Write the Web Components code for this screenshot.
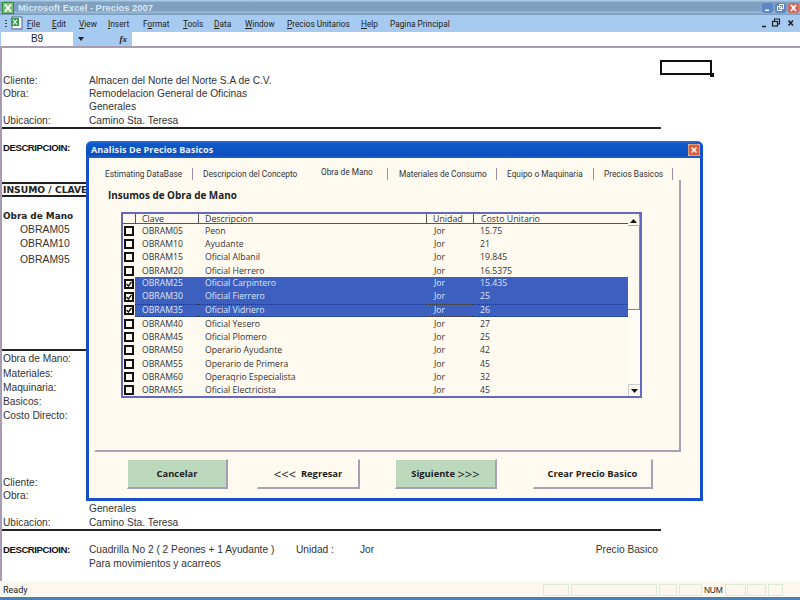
<!DOCTYPE html>
<html><head><meta charset="utf-8">
<style>
html,body{margin:0;padding:0;width:800px;height:600px;overflow:hidden;background:#fff}
body{display:flex;flex-direction:column;position:relative;font-family:"Open Sans","Noto Sans",sans-serif;color:#222}
</style></head><body>
<xl-titlebar></xl-titlebar>
<xl-menubar></xl-menubar>
<xl-formula></xl-formula>
<xl-sheet></xl-sheet>
<xl-status></xl-status>
<price-dialog></price-dialog>
<script>
function def(name,css,html,init){
  customElements.define(name,class extends HTMLElement{
    connectedCallback(){
      if(this.shadowRoot)return;
      const r=this.attachShadow({mode:'open'});
      r.innerHTML='<style>'+css+'</style>'+html;
      if(init)init(r,this);
    }
  });
}
def('xl-titlebar',`
:host{display:flex;align-items:center;height:15px;flex:none;position:relative;box-sizing:border-box;
 background:linear-gradient(180deg,#a9c9e6 0,#a9c9e6 1px,#80a0bf 2px,#7f9fbe 11px,#9dbfe0 12px,#7f9fbe 14px);}
.t{font:bold 9.4px "Liberation Sans",sans-serif;color:#dbe8f4;margin-left:4px;white-space:nowrap}
.ic{margin-left:2px;display:block}
.sp{flex:1}
.b{width:11px;height:10px;border-radius:2px;margin-right:2px;display:block}
.btns{display:flex;margin-right:1px;align-items:center}
`,`<svg class="ic" width="12" height="12" viewBox="0 0 12 12"><rect width="12" height="12" fill="#2f8a4a"/><rect x="1" y="1" width="10" height="10" fill="#7fbf7f"/><path d="M3 2.5L9 9.5M9 2.5L3 9.5" stroke="#fff" stroke-width="1.8"/></svg>
<span class="t">Microsoft Excel - Precios 2007</span><span class="sp"></span>
<span class="btns">
<svg class="b" viewBox="0 0 11 10"><rect width="11" height="10" rx="2" fill="#5a86c8"/><rect x="3" y="6.5" width="4" height="1.6" fill="#fff"/></svg>
<svg class="b" viewBox="0 0 11 10"><rect width="11" height="10" rx="2" fill="#5a86c8"/><path d="M4.5 1.5h4v4h-4zM2.5 3.5h4v4h-4z" fill="#5a86c8" stroke="#fff"/></svg>
<svg class="b" viewBox="0 0 11 10" style="margin-right:0"><rect width="11" height="10" rx="2" fill="#cf6a60"/><path d="M3 2l5 6M8 2L3 8" stroke="#fff" stroke-width="1.6"/></svg>
</span>`);
def('xl-menubar',`
:host{display:flex;align-items:center;height:17px;flex:none;background:#a6caf0;font:8.3px Roboto,"Open Sans",sans-serif;color:#222;position:relative;box-sizing:border-box}
.g{width:2px;height:10px;margin-left:5px;background-image:radial-gradient(#345 45%,transparent 50%);background-size:2px 3px}
.ic{margin-left:3px;margin-right:3px;display:block}
.items{display:grid;grid-template-columns:25px 27px 29px 35px 40px 31px 31px 42px 74px 29px auto;white-space:nowrap}
u{text-decoration-thickness:1px;text-underline-offset:1px}
.sp{flex:1}
.w{display:flex;align-items:center;width:41px;height:17px}
.w svg{display:block}
`,`<span class="g"></span>
<svg class="ic" width="14" height="15" viewBox="0 0 14 15"><rect x="2" y="1" width="10" height="12" fill="#f3f6f2" stroke="#55698a"/><rect x="1" y="2" width="8" height="8" fill="#3f9a4e"/><path d="M3 3.5l4 5M7 3.5l-4 5" stroke="#fff" stroke-width="1.2"/><path d="M4 13h8" stroke="#7b8aa5"/></svg>
<span class="items">
<span><u>F</u>ile</span><span><u>E</u>dit</span><span><u>V</u>iew</span><span><u>I</u>nsert</span><span>F<u>o</u>rmat</span><span><u>T</u>ools</span><span><u>D</u>ata</span><span><u>W</u>indow</span><span><u>P</u>recios Unitarios</span><span><u>H</u>elp</span><span>Pagina Principal</span>
</span><span class="sp"></span>
<span class="w"><svg width="41" height="17" viewBox="0 0 41 17"><path d="M3 11.5h4" stroke="#222" stroke-width="1.6"/><path d="M15.5 6.5V4h5v5h-2" fill="none" stroke="#222" stroke-width="1.2"/><rect x="13.5" y="6.5" width="5" height="4.5" fill="none" stroke="#222" stroke-width="1.2"/><path d="M29.5 5.5l4.5 5M34 5.5l-4.5 5" stroke="#222" stroke-width="1.6"/></svg></span>`);
def('xl-formula',`
:host{display:grid;grid-template-columns:1px 72px 59px 1fr;height:14px;flex:none;background:#a6caf0}
.n{background:#fff;font:10px "Liberation Sans",sans-serif;text-align:center;line-height:14px;color:#222}
.m{display:flex;align-items:center;justify-content:space-between;padding:0 3px 0 5px;box-sizing:border-box}
.f{background:#fff}
i{font:italic bold 9px "Liberation Serif",serif;color:#222;margin-right:2px}
`,`<span></span><span class="n">B9</span><span class="m"><svg width="6" height="4" viewBox="0 0 6 4"><path d="M0 0h6L3 4z" fill="#222"/></svg><i>fx</i></span><span class="f"></span>`);
def('xl-sheet',`
:host{display:block;flex:1;min-height:0;position:relative;border-top:2px solid #a89cb2;border-left:2px solid #a89cb2;box-sizing:border-box;background:#fff;overflow:hidden}
.w{display:flex;flex-direction:column;margin-left:-2px;padding-top:24.6px}
.r{display:grid;grid-template-columns:86px 1fr;padding-left:3px;height:13.4px;line-height:13.4px;white-space:nowrap;color:#333;font:10.2px/13.4px "Liberation Sans",sans-serif}
.rule{height:2px;width:661px;background:#222;flex:none}
.b{font:bold 9.6px/13.4px "Liberation Sans",sans-serif;color:#111;letter-spacing:-.45px}
.h{font:bold 9.2px "DejaVu Sans",sans-serif;color:#222;padding-left:3px;height:11px;line-height:11px;white-space:nowrap}
.o{font:bold 8.9px "DejaVu Sans",sans-serif;color:#222;padding-left:3px;height:14px;line-height:14px;white-space:nowrap}
.c{padding-left:20px;height:14.6px;font:10.4px/14.6px "Liberation Sans",sans-serif;color:#333}
.cell{position:absolute;left:658px;top:12px;width:48px;height:11px;border:2px solid #111}
.cell::after{content:"";position:absolute;right:-4px;bottom:-4px;width:4px;height:4px;background:#111}
.g{display:grid;grid-template-columns:86px 207px 64px 1fr;padding-left:3px;height:13.4px;line-height:13.4px;white-space:nowrap;color:#333;font:10.2px/13.4px "Liberation Sans",sans-serif;width:661px;box-sizing:border-box}
.j{display:flex;justify-content:space-between;padding-right:3px}
`,`<div class="cell"></div><div class="w">
<div class="r" style="margin-top:1px"><span>Cliente:</span><span>Almacen del Norte del Norte S.A de C.V.</span></div>
<div class="r"><span>Obra:</span><span>Remodelacion General de Oficinas</span></div>
<div class="r"><span></span><span>Generales</span></div>
<div class="r"><span>Ubicacion:</span><span>Camino Sta. Teresa</span></div>
<div class="rule"></div>
<div class="r" style="margin-top:12px"><span class="b">DESCRIPCIOIN:</span></div>
<div class="rule" style="margin-top:27px"></div>
<div class="h">INSUMO / CLAVE</div>
<div class="rule"></div>
<div class="o" style="margin-top:12px">Obra de Mano</div>
<div class="c">OBRAM05</div><div class="c">OBRAM10</div><div class="c" style="margin-top:1px">OBRAM95</div>
<div class="rule" style="margin-top:82px"></div>
<div class="r" style="height:14.2px;margin-top:1px"><span>Obra de Mano:</span></div>
<div class="r" style="height:14.2px"><span>Materiales:</span></div>
<div class="r" style="height:14.2px"><span>Maquinaria:</span></div>
<div class="r" style="height:14.2px"><span>Basicos:</span></div>
<div class="r" style="height:14.2px"><span>Costo Directo:</span></div>
<div class="r" style="margin-top:52.3px"><span>Cliente:</span></div>
<div class="r"><span>Obra:</span></div>
<div class="r"><span></span><span>Generales</span></div>
<div class="r"><span>Ubicacion:</span><span>Camino Sta. Teresa</span></div>
<div class="rule"></div>
<div class="g" style="margin-top:12px"><span class="b">DESCRIPCIOIN:</span><span>Cuadrilla No 2 ( 2 Peones + 1 Ayudante )</span><span>Unidad :</span><span class="j"><span>Jor</span><span>Precio Basico</span></span></div>
<div class="r" style="margin-top:.7px"><span></span><span>Para movimientos y acarreos</span></div>
</div>`);
def('xl-status',`
:host{display:flex;flex:none;height:19px;flex-direction:column;background:#fdf8ee}
.m{flex:1;display:flex;align-items:flex-end;font:9px Roboto,sans-serif;color:#222;padding-left:3px}
.rd{align-self:center;padding-top:1px}
.sp{flex:1}
.p{box-sizing:border-box;height:12px;margin-bottom:1px;border:1px solid #dcebd8;margin-right:2px;font:8.5px/10px "Liberation Sans",sans-serif;text-align:center;letter-spacing:-.3px}
.b{height:3px;background:#4a80b8;flex:none}
`,`<div class="m"><span class="rd">Ready</span><span class="sp"></span>
<span class="p" style="width:26px"></span><span class="p" style="width:86px"></span><span class="p" style="width:18px"></span><span class="p" style="width:23px;margin-right:1px"></span><span class="p" style="width:20px;border-color:transparent">NUM</span><span class="p" style="width:21px;margin-right:1px"></span><span class="p" style="width:19px"></span><span class="p" style="width:15px;margin-right:17px"></span>
</div><div class="b"></div>`);
def('ui-button',`
:host{display:flex;align-items:center;justify-content:center;box-sizing:border-box;height:30px;background:#fffaf0;
 border-right:2px solid #a99fb0;border-bottom:2px solid #a99fb0;border-top:1px solid #fffdf7;border-left:1px solid #fffdf7;
 font:bold 9.4px "Open Sans",sans-serif;color:#1c1c1c;white-space:nowrap}
:host([green]){background:#bcd9bd}
`,`<slot></slot>`);
def('tab-strip',`
:host{display:grid;grid-template-columns:100px 116px 79px 109px 97px 79px;height:18px;margin-left:4px;font:8.3px/18px Roboto,"Open Sans",sans-serif;color:#333;white-space:nowrap}
span{box-sizing:border-box;position:relative;padding-left:var(--p,10px)}
.e::after{content:"";position:absolute;right:0;top:3px;height:12px;width:1px;background:#9a8fa6}
.s{line-height:15px}
`,`<span class="e" style="--p:12px">Estimating DataBase</span>
<span>Descripcion del Concepto</span>
<span class="e s" style="--p:12px">Obra de Mano</span>
<span class="e" style="--p:11px">Materiales de Consumo</span><span class="e">Equipo o Maquinaria</span><span class="e">Precios Basicos</span>`);
def('price-list',`
:host{display:block;position:relative;width:521px;height:186px;box-sizing:border-box;border:2px solid #6468c4;background:#fffaf0;font:8.7px "Open Sans",sans-serif;color:#333;overflow:hidden}
.cols{display:grid;grid-template-columns:12px 63px 228px 47px 1fr;align-items:center;white-space:nowrap}
.h{height:9px;line-height:11px;border-bottom:1px solid #555;width:505px;box-sizing:content-box;font-size:8.8px}
.h span{border-left:1px solid #555;padding-left:6px;height:9px;box-sizing:border-box}
.h span:first-child{border:0;padding:0}
.h span:last-child{padding-left:7px}
.body{display:flex;flex-direction:column;width:505px}
.r{height:13.3px;flex:none}
.r span{padding-left:7px}
.r span:nth-child(4){padding-left:8px}
.r span:nth-child(5){padding-left:7px}
.sel .c~span{background:#3d5fbf;color:#dde4f6;height:13.3px;line-height:13.3px}
.foc .c~span{border-top:1px dotted #333;border-bottom:1px dotted #333;line-height:11.3px;box-sizing:border-box}
.c{padding:0 0 0 1px!important;display:flex;align-items:center;height:13.3px}
.c i{display:block;width:10px;height:10px;box-sizing:border-box;border:2px solid #111;background:#fffaf0;position:relative}
.c svg{display:block;position:absolute;left:0;top:0}
.sb{position:absolute;right:0;top:0;bottom:0;width:12px;background:#fffcf6}
.thumb{position:absolute;left:0;right:0;top:0;height:96px;background:#fffaf0;border-bottom:1px solid #888;border-right:1px solid #888;box-sizing:border-box}
.up,.dn{position:absolute;left:0;width:12px;height:9px;background:#fffaf0;display:flex;align-items:center;justify-content:center;box-sizing:border-box}
.up{top:3px;border-bottom:1px solid #aaa;border-right:1px solid #aaa}
.dn{bottom:0;height:12px;border-left:1px solid #ccc;border-top:1px solid #ccc}
`,`<div class="cols h"><span></span><span>Clave</span><span>Descripcion</span><span>Unidad</span><span>Costo Unitario</span></div><div class="body"></div>
<div class="sb"><div class="thumb"></div><div class="up"><svg width="7" height="4" viewBox="0 0 7 4"><path d="M0 4h7L3.5 0z" fill="#111"/></svg></div><div class="dn"><svg width="7" height="4" viewBox="0 0 7 4"><path d="M0 0h7L3.5 4z" fill="#111"/></svg></div></div>`,
(r)=>{
 const d=[['05','Peon','15.75'],['10','Ayudante','21'],['15','Oficial Albanil','19.845'],['20','Oficial Herrero','16.5375'],['25','Oficial Carpintero','15.435',1],['30','Oficial Fierrero','25',1],['35','Oficial Vidriero','26',2],['40','Oficial Yesero','27'],['45','Oficial Plomero','25'],['50','Operario Ayudante','42'],['55','Operario de Primera','45'],['60','Operaqrio Especialista','32'],['65','Oficial Electricista','45']];
 r.querySelector('.body').innerHTML=d.map(x=>`<div class="cols r ${x[3]?'sel':''} ${x[3]==2?'foc':''}"><span class="c"><i>${x[3]?'<svg width="6" height="6" viewBox="0 0 6 6"><path d="M.5 3l2 2L5.5.8" fill="none" stroke="#111" stroke-width="1.4"/></svg>':''}</i></span><span>OBRAM${x[0]}</span><span>${x[1]}</span><span>Jor</span><span>${x[2]}</span></div>`).join('');
});
def('price-dialog',`
:host{position:absolute;left:86px;top:141px;width:617px;height:360px;box-sizing:border-box;display:flex;flex-direction:column;border:3px solid #1650c8;border-top:0;border-radius:6px 6px 0 0;background:#fffaf0}
.title{height:17px;margin:0 -3px;flex:none;background:linear-gradient(180deg,#2a70d8 0,#0e58c8 3px,#0c50c0 14px,#1e60d0 17px);border-radius:6px 6px 0 0;display:flex;align-items:center;padding:0 3px 0 5px;color:#e8f0ff;font:bold 9px "Open Sans",sans-serif;letter-spacing:.1px;white-space:nowrap}
.title span{flex:1}
.x{display:block}
.body{flex:1;display:flex;flex-direction:column;padding:7px 0 0 0;min-height:0}
.page{margin:-3px 19px 0 6px;height:272px;box-sizing:border-box;border-right:2px solid #a99fb0;border-bottom:2px solid #a99fb0;display:flex;flex-direction:column;padding-top:8px;padding-left:13px}
h3{margin:0 0 10px;font:bold 9.9px/14px "Open Sans",sans-serif;color:#222}
price-list{margin-left:13px}
.bt{display:flex;margin:7px 0 0 38px}
.bt ui-button:nth-child(1){width:101px}
.bt ui-button:nth-child(2){width:103px;margin-left:29px}
.bt ui-button:nth-child(3){width:102px;margin-left:35px}
.bt ui-button:nth-child(4){width:120px;margin-left:36px}
.a{font:400 13px "Open Sans",sans-serif}
`,`<div class="title"><span>Analisis De Precios Basicos</span>
<svg class="x" width="12" height="12" viewBox="0 0 12 12"><rect width="12" height="12" rx="2" fill="#d9603a" stroke="#f0d8c8"/><path d="M3.5 3.5l5 5M8.5 3.5l-5 5" stroke="#fff" stroke-width="1.5"/></svg></div>
<div class="body"><tab-strip></tab-strip>
<div class="page"><h3>Insumos de Obra de Mano</h3><price-list></price-list></div>
<div class="bt"><ui-button green>Cancelar</ui-button><ui-button><span class="a">&lt;&lt;&lt;</span>&nbsp;&nbsp;Regresar</ui-button><ui-button green>Siguiente&nbsp;<span class="a">&gt;&gt;&gt;</span></ui-button><ui-button>Crear Precio Basico</ui-button></div>
</div>`);
</script>
</body></html>
